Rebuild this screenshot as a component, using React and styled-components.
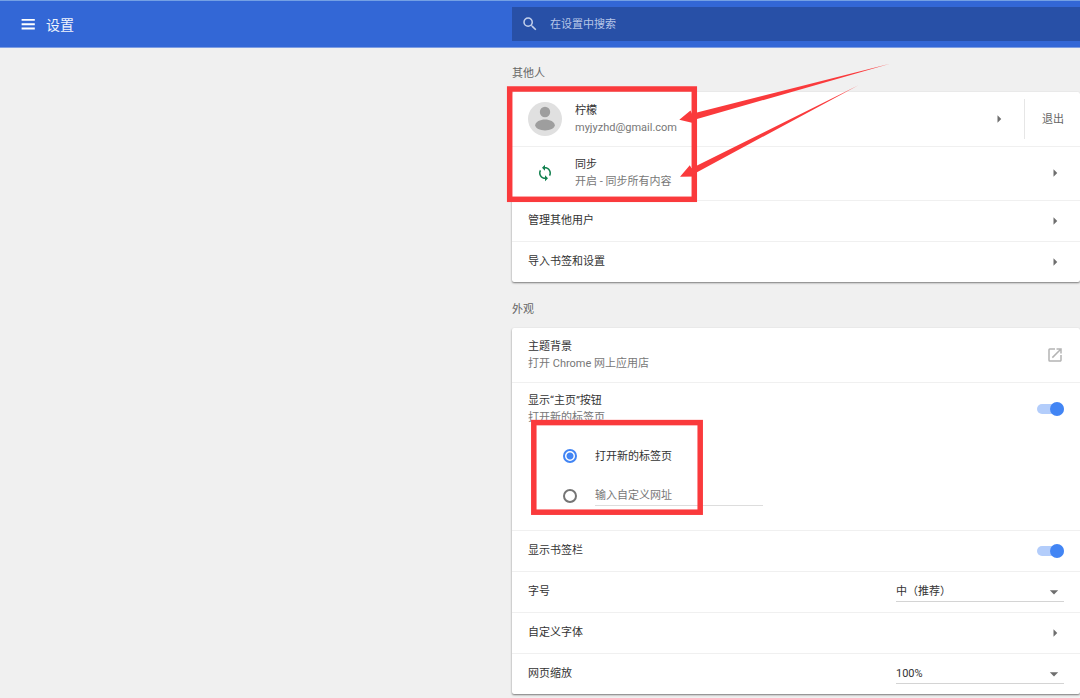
import React, { useState } from "react";
import styled, { createGlobalStyle, css } from "styled-components";
import {
  MdArrowDropDown,
  MdArrowRight,
  MdOpenInNew,
  MdSearch,
  MdSync,
} from "react-icons/md";

const GlobalStyle = createGlobalStyle`
  * {
    box-sizing: border-box;
  }
  body {
    margin: 0;
    background-color: #f0f0f0;
    color: #333;
    font-family: Roboto, "Noto Sans CJK SC", sans-serif;
    font-size: 11px;
    line-height: 17px;
  }
  button, input, select {
    margin: 0;
    padding: 0;
    border: none;
    background: none;
    color: inherit;
    font: inherit;
  }
`;

const Page = styled.div`
  position: relative;
  min-height: 100vh;
  overflow: hidden;
`;

const columns = css`
  display: grid;
  grid-template-columns: 512px minmax(0, 1fr);
`;

const Header = styled.header`
  ${columns}
  align-items: center;
  height: 48px;
  background-color: #3367d6;
  border-top: 1px solid #74a0e4;
  border-bottom: 1px solid #7d9de3;
  color: #fff;
`;

const Brand = styled.div`
  display: flex;
  align-items: center;
  gap: 9px;
  padding-left: 19px;
`;

const Title = styled.h1`
  margin: 0;
  padding-top: 2px;
  font-size: 14px;
  font-weight: 400;
  line-height: 20px;
  color: #f0f4fd;
`;

const IconButton = styled.button`
  display: flex;
  flex: none;
  align-items: center;
  justify-content: center;
  width: 18px;
  height: 18px;
  font-size: 18px;
  color: ${({ color }) => color || "#6e6e6e"};
  cursor: pointer;
`;

const SearchBox = styled.label`
  display: flex;
  align-items: center;
  gap: 11px;
  height: 34px;
  padding: 0 9px;
  background-color: #2850a7;
  color: #c3d0ec;
  font-size: 18px;
`;

const SearchInput = styled.input`
  flex: 1;
  min-width: 0;
  font-size: 11px;
  outline: none;
  &::placeholder {
    color: #b7c6e8;
    opacity: 1;
  }
`;

const Content = styled.div`
  ${columns}
`;

const Main = styled.main`
  grid-column: 2;
  padding-bottom: 4px;
`;

const Section = styled.section`
  padding-top: 17px;
  & + & {
    padding-top: 19px;
  }
`;

const SectionTitle = styled.h2`
  margin: 0;
  padding-bottom: 10px;
  font-size: 11px;
  font-weight: 400;
  line-height: 17px;
  color: #666;
`;

const Card = styled.div`
  background-color: #fff;
  border-radius: 2px;
  box-shadow: 0 1px 2px rgba(0, 0, 0, 0.5);
`;

const Row = styled.div`
  display: flex;
  align-items: center;
  gap: 13px;
  height: ${({ $tall }) => ($tall ? "54px" : "41px")};
  padding: 0 16px;
`;

const Item = styled.div`
  & + & {
    border-top: 1px solid #f0f0f0;
  }
  & + & > ${Row}:first-child {
    margin-top: -1px;
  }
`;

const RowText = styled.div`
  flex: 1;
  min-width: 0;
`;

const Secondary = styled.div`
  color: #777;
`;

const IconSlot = styled.div`
  display: flex;
  flex: none;
  align-items: center;
  justify-content: center;
  width: 34px;
  height: 34px;
  font-size: 18px;
  color: #12804f;
`;

const SignOut = styled.button`
  height: 40px;
  margin-left: 3px;
  padding-left: 17px;
  border-left: 1px solid #e6e6e6;
  color: #666;
  cursor: pointer;
`;

const Toggle = styled.input`
  appearance: none;
  display: flex;
  flex: none;
  align-items: center;
  width: 27px;
  height: 10px;
  border-radius: 5px;
  background-color: #bdbdbd;
  cursor: pointer;
  &::before {
    content: "";
    flex: none;
    width: 14px;
    height: 14px;
    border-radius: 50%;
    background-color: #fafafa;
  }
  &:checked {
    background-color: #b3cdfb;
  }
  &:checked::before {
    margin-left: auto;
    background-color: #4285f4;
  }
`;

const Options = styled.div`
  padding: 0 16px 14px 51px;
`;

const Option = styled.div`
  display: flex;
  align-items: center;
  gap: 18px;
  height: 40px;
`;

const Radio = styled.input`
  appearance: none;
  flex: none;
  width: 14px;
  height: 14px;
  border: 2px solid #757575;
  border-radius: 50%;
  &:checked {
    border-color: #4285f4;
    background: radial-gradient(circle, #4285f4 3px, #fff 4px);
  }
`;

const UrlInput = styled.input`
  width: 168px;
  height: 20px;
  border-bottom: 1px solid #ddd;
  outline: none;
  &::placeholder {
    color: #777;
    opacity: 1;
  }
`;

const SelectWrapper = styled.div`
  display: grid;
  align-items: center;
  width: 168px;
  height: 20px;
  border-bottom: 1px solid #d4d4d4;
  font-size: 20px;
  color: #6e6e6e;
  & > * {
    grid-area: 1 / 1;
  }
  & > svg {
    justify-self: end;
    pointer-events: none;
  }
`;

const Select = styled.select`
  appearance: none;
  width: 100%;
  font-size: 11px;
  line-height: 17px;
  color: #333;
  outline: none;
`;

// Red frames and arrows drawn over the page
const Marks = styled.svg`
  position: absolute;
  top: 0;
  left: 0;
  pointer-events: none;
`;

function MenuIcon() {
  return (
    <svg width="18" height="18" viewBox="0 0 18 18" aria-hidden="true">
      <path
        d="M2.6 4.9h13.2M2.6 9.2h13.2M2.6 13.5h13.2"
        stroke="currentColor"
        strokeWidth="1.9"
      />
    </svg>
  );
}

function Avatar() {
  return (
    <svg width="34" height="34" viewBox="0 0 34 34" aria-hidden="true">
      <circle cx="17" cy="17" r="17" fill="#e0e0e0" />
      <circle cx="17" cy="10" r="5.2" fill="#9e9e9e" />
      <path
        d="M7.2 23.2c0-3.6 5-5.8 9.8-5.8s9.8 2.2 9.8 5.8c0 3-4.8 5.2-9.8 5.2s-9.8-2.2-9.8-5.2z"
        fill="#9e9e9e"
      />
    </svg>
  );
}

function Arrow({ label }) {
  return (
    <IconButton aria-label={label}>
      <MdArrowRight />
    </IconButton>
  );
}

function LinkRow({ label }) {
  return (
    <Item>
      <Row>
        <RowText>{label}</RowText>
        <Arrow label={label} />
      </Row>
    </Item>
  );
}

function SelectRow({ id, label, options }) {
  return (
    <Item>
      <Row>
        <RowText>
          <label htmlFor={id}>{label}</label>
        </RowText>
        <SelectWrapper>
          <Select id={id}>
            {options.map((option) => (
              <option key={option}>{option}</option>
            ))}
          </Select>
          <MdArrowDropDown />
        </SelectWrapper>
      </Row>
    </Item>
  );
}

export default function App() {
  const [showHome, setShowHome] = useState(true);
  const [showBookmarks, setShowBookmarks] = useState(true);
  const [homePage, setHomePage] = useState("newtab");

  return (
    <Page>
      <GlobalStyle />
      <Header>
        <Brand>
          <IconButton color="#fff" aria-label="菜单">
            <MenuIcon />
          </IconButton>
          <Title>设置</Title>
        </Brand>
        <SearchBox>
          <MdSearch />
          <SearchInput
            type="text"
            placeholder="在设置中搜索"
            aria-label="在设置中搜索"
          />
        </SearchBox>
      </Header>

      <Content>
        <Main>
          <Section>
            <SectionTitle>其他人</SectionTitle>
            <Card>
              <Item>
                <Row $tall>
                  <IconSlot>
                    <Avatar />
                  </IconSlot>
                  <RowText>
                    <div>柠檬</div>
                    <Secondary>myjyzhd@gmail.com</Secondary>
                  </RowText>
                  <Arrow label="柠檬" />
                  <SignOut>退出</SignOut>
                </Row>
              </Item>
              <Item>
                <Row $tall>
                  <IconSlot>
                    <MdSync />
                  </IconSlot>
                  <RowText>
                    <div>同步</div>
                    <Secondary>开启 - 同步所有内容</Secondary>
                  </RowText>
                  <Arrow label="同步" />
                </Row>
              </Item>
              <LinkRow label="管理其他用户" />
              <LinkRow label="导入书签和设置" />
            </Card>
          </Section>

          <Section>
            <SectionTitle>外观</SectionTitle>
            <Card>
              <Item>
                <Row $tall>
                  <RowText>
                    <div>主题背景</div>
                    <Secondary>打开 Chrome 网上应用店</Secondary>
                  </RowText>
                  <IconButton color="#b4b4b4" aria-label="主题背景">
                    <MdOpenInNew />
                  </IconButton>
                </Row>
              </Item>
              <Item>
                <Row $tall>
                  <RowText>
                    <label htmlFor="home">显示“主页”按钮</label>
                    <Secondary>打开新的标签页</Secondary>
                  </RowText>
                  <Toggle
                    id="home"
                    type="checkbox"
                    checked={showHome}
                    onChange={() => setShowHome(!showHome)}
                  />
                </Row>
                <Options>
                  <Option>
                    <Radio
                      id="newtab"
                      type="radio"
                      name="homepage"
                      checked={homePage === "newtab"}
                      onChange={() => setHomePage("newtab")}
                    />
                    <label htmlFor="newtab">打开新的标签页</label>
                  </Option>
                  <Option>
                    <Radio
                      type="radio"
                      name="homepage"
                      aria-label="输入自定义网址"
                      checked={homePage === "custom"}
                      onChange={() => setHomePage("custom")}
                    />
                    <UrlInput
                      type="text"
                      placeholder="输入自定义网址"
                      aria-label="输入自定义网址"
                    />
                  </Option>
                </Options>
              </Item>
              <Item>
                <Row>
                  <RowText>
                    <label htmlFor="bookmarks">显示书签栏</label>
                  </RowText>
                  <Toggle
                    id="bookmarks"
                    type="checkbox"
                    checked={showBookmarks}
                    onChange={() => setShowBookmarks(!showBookmarks)}
                  />
                </Row>
              </Item>
              <SelectRow id="size" label="字号" options={["中（推荐）"]} />
              <LinkRow label="自定义字体" />
              <SelectRow id="zoom" label="网页缩放" options={["100%"]} />
            </Card>
          </Section>
        </Main>
      </Content>

      <Marks width="900" height="530" viewBox="0 0 900 530" aria-hidden="true">
        <g fill="none" stroke="#fa3a3c" strokeWidth="5.5">
          <rect x="509.7" y="89" width="184.6" height="110.3" />
          <rect x="533.8" y="422.6" width="166.4" height="89.6" />
        </g>
        <g fill="#fa3a3c">
          <path d="M679.3 119.8L690.5 110.5L692 113.8L890 63.8L697 119L693.5 119.6L694 123.2Z" />
          <path d="M680 176.8L689.8 165.2L691.5 168.2L858 85.5L697 172.2L694 173.5L696 176.5Z" />
        </g>
      </Marks>
    </Page>
  );
}
